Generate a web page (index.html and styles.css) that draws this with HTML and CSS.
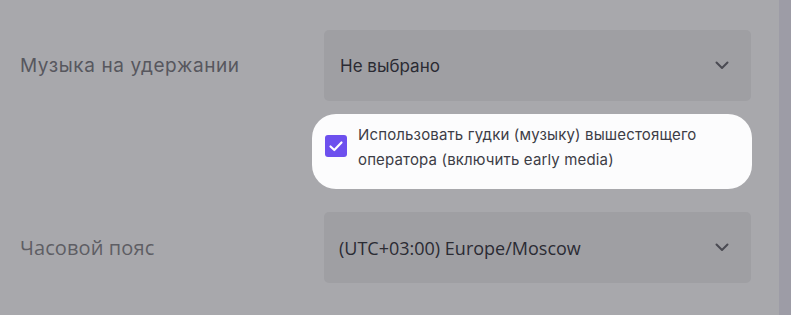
FILE: index.html
```html
<!DOCTYPE html>
<html lang="ru">
<head>
    <meta charset="UTF-8">
    <title>Настройки</title>
    <link rel="stylesheet" href="styles.css">
</head>
<body>
    <div class="page">
        <div class="form">
            <div class="row">
                <div class="label">Музыка на удержании</div>
                <div class="select">
                    <span>Не выбрано</span>
                    <svg class="chevron" width="14" height="9" viewBox="0 0 14 9"><path d="M1.5 1.5 L7 7 L12.5 1.5" fill="none" stroke="#4a4a52" stroke-width="2" stroke-linecap="round" stroke-linejoin="round"/></svg>
                </div>
            </div>

            <div class="row">
                <div class="label"></div>
                <div class="check-card">
                    <span class="checkbox">
                        <svg width="22" height="22" viewBox="0 0 22 22"><path d="M5.5 11.5 L9.3 15 L16.5 7.5" fill="none" stroke="#fff" stroke-width="2.2" stroke-linecap="round" stroke-linejoin="round"/></svg>
                    </span>
                    <span class="check-text">Использовать гудки (музыку) вышестоящего оператора (включить early media)</span>
                </div>
            </div>

            <div class="row tz">
                <div class="label">Часовой пояс</div>
                <div class="select">
                    <span>(UTC+03:00) Europe/Moscow</span>
                    <svg class="chevron" width="14" height="9" viewBox="0 0 14 9"><path d="M1.5 1.5 L7 7 L12.5 1.5" fill="none" stroke="#4a4a52" stroke-width="2" stroke-linecap="round" stroke-linejoin="round"/></svg>
                </div>
            </div>
        </div>
        <div class="scroll"></div>
    </div>
</body>
</html>
```

FILE: styles.css
```css
/* Фон страницы под затемнением */
body {
    margin: 0;
    padding: 0;
    background-color: #a8a8ac;
    font-family: 'Inter', 'Open Sans', sans-serif;
}

.page {
    display: flex;
    height: 315px;
    overflow: hidden;
}

.form {
    flex: 1;
    padding-top: 30px;
    padding-left: 20px;
    padding-right: 28px;
}

/* Строки формы */
.row {
    display: flex;
    align-items: center;
    margin-bottom: 13px;
}

.row.tz {
    margin-top: 23px;
}

.label {
    width: 304px;
    font-size: 19px;
    color: #57575e;
    letter-spacing: 0.6px;
}

.tz .label {
    font-family: 'Open Sans', sans-serif;
    font-size: 20px;
    letter-spacing: 0.1px;
    color: #5e5e64;
}

.select {
    flex: 1;
    height: 71px;
    padding: 0 22px 0 16px;
    background-color: #9f9fa3;
    border-radius: 5px;
    display: flex;
    align-items: center;
    justify-content: space-between;
    font-size: 17px;
    color: #2b2b33;
    box-sizing: border-box;
}

.tz .select {
    font-family: 'Open Sans', sans-serif;
    font-size: 18px;
    padding-left: 15px;
}

/* Карточка с чекбоксом */
.check-card {
    flex: 1;
    margin-left: -12px;
    margin-right: -1px;
    height: 75px;
    background-color: #fcfcfd;
    border-radius: 24px;
    display: flex;
    align-items: flex-start;
    padding: 8px 30px 0 13px;
    box-sizing: border-box;
}

.checkbox {
    width: 22px;
    height: 22px;
    flex: none;
    margin-top: 13px;
    background-color: #6d50ee;
    border-radius: 3px;
    display: flex;
}

.check-text {
    margin-left: 11px;
    font-size: 15px;
    line-height: 25px;
    letter-spacing: 0.15px;
    color: #3d3d46;
}

.scroll {
    width: 12px;
    background-color: #9d9ca6;
}
```
